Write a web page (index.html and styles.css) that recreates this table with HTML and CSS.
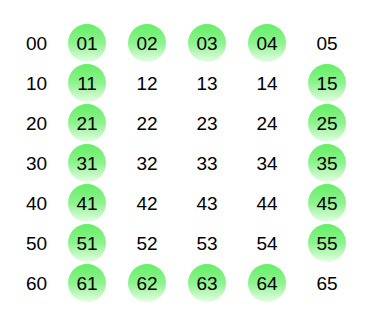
FILE: index.html
```html
<!DOCTYPE html>
<html>
<head>
<meta charset="utf-8">
<link rel="stylesheet" href="styles.css">
</head>
<body>
<div class="grid">
  <span class="cell">00</span><span class="cell on">01</span><span class="cell on">02</span><span class="cell on">03</span><span class="cell on">04</span><span class="cell">05</span>
  <span class="cell">10</span><span class="cell on">11</span><span class="cell">12</span><span class="cell">13</span><span class="cell">14</span><span class="cell on">15</span>
  <span class="cell">20</span><span class="cell on">21</span><span class="cell">22</span><span class="cell">23</span><span class="cell">24</span><span class="cell on">25</span>
  <span class="cell">30</span><span class="cell on">31</span><span class="cell">32</span><span class="cell">33</span><span class="cell">34</span><span class="cell on">35</span>
  <span class="cell">40</span><span class="cell on">41</span><span class="cell">42</span><span class="cell">43</span><span class="cell">44</span><span class="cell on">45</span>
  <span class="cell">50</span><span class="cell on">51</span><span class="cell">52</span><span class="cell">53</span><span class="cell">54</span><span class="cell on">55</span>
  <span class="cell">60</span><span class="cell on">61</span><span class="cell on">62</span><span class="cell on">63</span><span class="cell on">64</span><span class="cell">65</span>
</div>
</body>
</html>
```
FILE: styles.css
```css
html, body {
  margin: 0;
  background: #ffffff;
}
body {
  font-family: "Liberation Sans", Arial, sans-serif;
  font-size: 19px;
  color: #000000;
}
.grid {
  display: grid;
  grid-template-columns: 41px repeat(5, 60px);
  grid-auto-rows: 40px;
  padding: 23px 0 0 16px;
}
.cell {
  justify-self: center;
  align-self: center;
  width: 38px;
  height: 38px;
  line-height: 39px;
  text-align: center;
  border-radius: 50%;
}
.cell.on {
  background: linear-gradient(to bottom, #66ee66 0%, #8ef38e 50%, #e4fde4 100%);
}
```
